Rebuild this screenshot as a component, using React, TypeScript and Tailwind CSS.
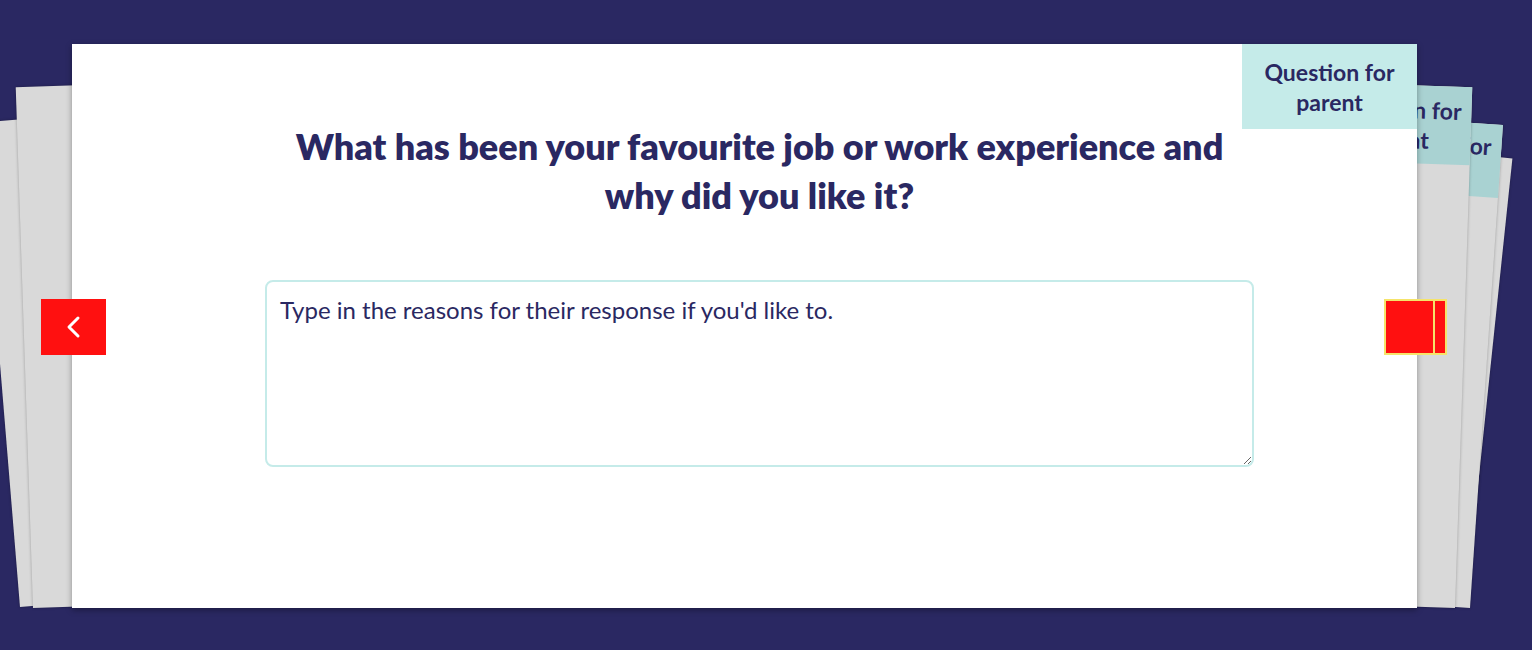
const NAVY = "#2a2862";

function BackTag({ className }: { className: string }) {
  return (
    <div
      className={`absolute right-0 top-0 flex items-center justify-center bg-[#a9d2d2] text-center font-['Lato',sans-serif] text-[23px] font-bold leading-[30px] text-[#2a2862] ${className}`}
    >
      Question for
      <br />
      parent
    </div>
  );
}

export default function App() {
  return (
    <div className="relative h-[650px] w-full overflow-hidden bg-[#2a2862] pt-[44px]">
      {/* stacked cards behind, left side */}
      <div className="absolute left-[20px] top-[121px] h-[486px] w-[700px] origin-bottom-left rotate-[-4.7deg] bg-[#d9d9d9] shadow-[0_0_3px_rgba(0,0,0,0.3)]" />
      <div className="absolute left-[33px] top-[87px] h-[521px] w-[700px] origin-bottom-left rotate-[-1.9deg] bg-[#d9d9d9] shadow-[0_0_3px_rgba(0,0,0,0.3)]" />

      {/* stacked cards behind, right side */}
      <div className="absolute left-[666px] top-[156px] h-[444px] w-[800px] origin-bottom-right rotate-[6deg] bg-[#d9d9d9] shadow-[0_0_3px_rgba(0,0,0,0.3)]" />
      <div className="absolute left-[670px] top-[124px] h-[484px] w-[800px] origin-bottom-right rotate-[3.9deg] bg-[#d9d9d9] shadow-[0_0_3px_rgba(0,0,0,0.3)]">
        <BackTag className="h-[73px] w-[150px]" />
      </div>
      <div className="absolute left-[655px] top-[87px] h-[521px] w-[800px] origin-bottom-right rotate-[1.9deg] bg-[#d9d9d9] shadow-[0_0_3px_rgba(0,0,0,0.3)]">
        <BackTag className="h-[78px] w-[150px]" />
      </div>

      {/* main card */}
      <section className="relative z-10 ml-[72px] h-[564px] w-[1345px] bg-white shadow-[0_2px_6px_rgba(0,0,0,0.35)]">
        <div className="absolute right-0 top-0 flex h-[85px] w-[175px] items-center justify-center bg-[#c5ebe9] text-center font-['Lato',sans-serif] text-[23px] font-bold leading-[30px] text-[#2a2862]">
          Question for
          <br />
          parent
        </div>

        <div className="ml-[193px] flex w-[989px] flex-col items-center pt-[78px]">
          <h1
            className="text-center font-['Lato',sans-serif] text-[36px] font-extrabold leading-[49px]"
            style={{ color: NAVY }}
          >
            What has been your favourite job or work experience and
            <br />
            why did you like it?
          </h1>
          <textarea
            className="mt-[60px] h-[187px] w-[989px] rounded-lg border-2 border-[#c5ebe9] px-[13px] pb-[15px] pt-[13px] font-['Lato',sans-serif] text-[24px] leading-[30px] text-[#2a2862] outline-none placeholder:text-[#2a2862]"
            placeholder="Type in the reasons for their response if you'd like to."
          />
        </div>
      </section>

      {/* nav buttons */}
      <button className="absolute left-[41px] top-[299px] z-20 flex h-[56px] w-[65px] items-center justify-center bg-[#ff1010]">
        <svg width="20" height="24" viewBox="0 0 20 24" fill="none">
          <polyline
            points="14,3 5,12 14,21"
            stroke="white"
            strokeWidth="3"
            strokeLinecap="round"
            strokeLinejoin="round"
          />
        </svg>
      </button>
      <button className="absolute left-[1384px] top-[299px] z-20 flex h-[56px] w-[63px] border-2 border-[#f5e46a] bg-[#ff1010]">
        <span className="ml-auto mr-[10px] h-full w-[2px] bg-[#f5e46a]" />
      </button>
    </div>
  );
}
